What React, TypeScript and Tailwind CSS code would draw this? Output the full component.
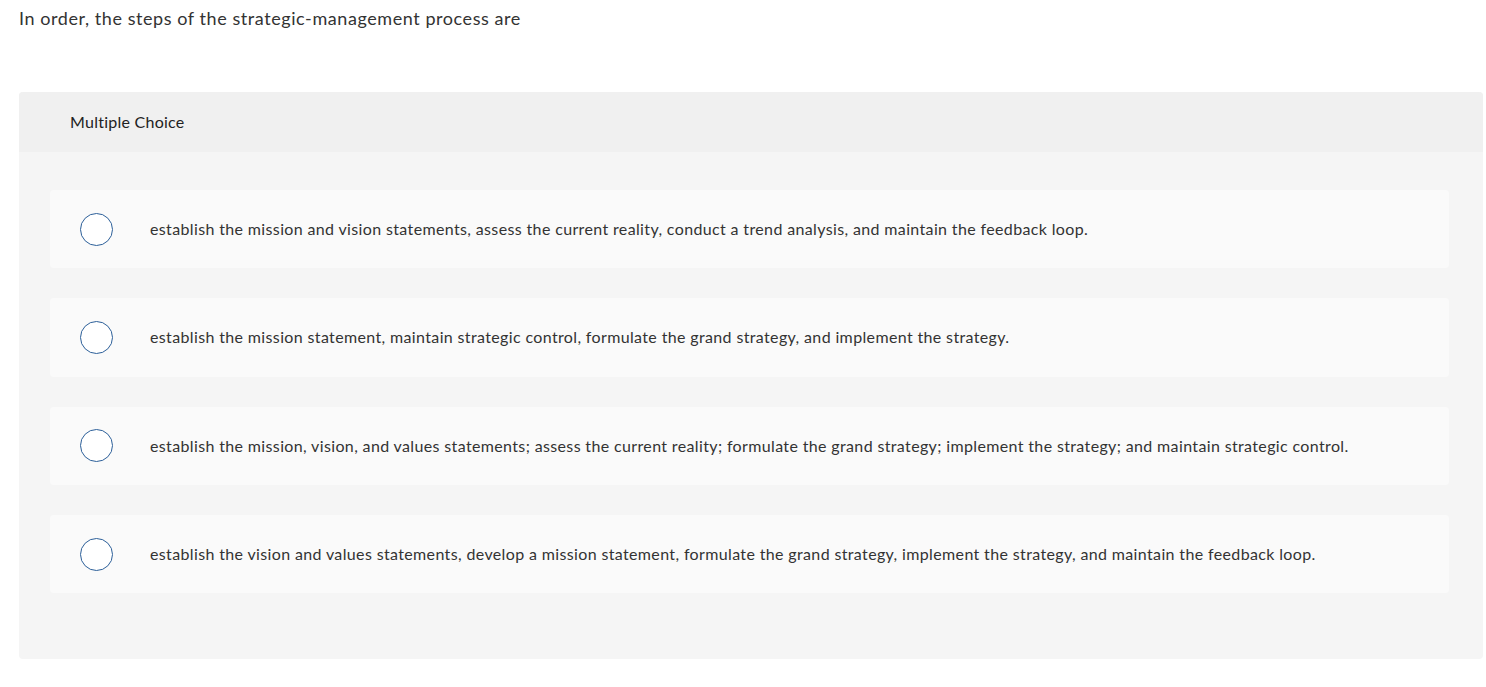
import React from "react";

const options = [
  "establish the mission and vision statements, assess the current reality, conduct a trend analysis, and maintain the feedback loop.",
  "establish the mission statement, maintain strategic control, formulate the grand strategy, and implement the strategy.",
  "establish the mission, vision, and values statements; assess the current reality; formulate the grand strategy; implement the strategy; and maintain strategic control.",
  "establish the vision and values statements, develop a mission statement, formulate the grand strategy, implement the strategy, and maintain the feedback loop.",
];

export default function App() {
  return (
    <div className="min-h-[687px] bg-white px-[19px] pt-[6px] text-[#333] [font-family:Lato,sans-serif]">
      <p className="text-[18px] leading-[24px] tracking-[0.57px] text-[#333]">
        In order, the steps of the strategic-management process are
      </p>
      <div className="mt-[62px] w-[1464px] rounded-[4px] bg-[#f5f5f5]">
        <div className="flex h-[60px] items-center rounded-t-[4px] bg-[#f0f0f0] pl-[51px] text-[16px] tracking-[0.25px] text-[#222]">
          Multiple Choice
        </div>
        <div className="flex flex-col gap-[30px] px-[31px] pt-[38px] pb-[66px]">
          {options.map((o, i) => (
            <div
              key={i}
              className="flex h-[78.3px] w-[1399px] items-center rounded-[4px] bg-[#fafafa]"
            >
              <div className="ml-[30px] h-[33px] w-[33px] shrink-0 rounded-full border-[1.5px] border-[#2c5f99] bg-white" />
              <span className="ml-[37px] text-[16px] tracking-[0.36px] text-[#333]">{o}</span>
            </div>
          ))}
        </div>
      </div>
    </div>
  );
}
